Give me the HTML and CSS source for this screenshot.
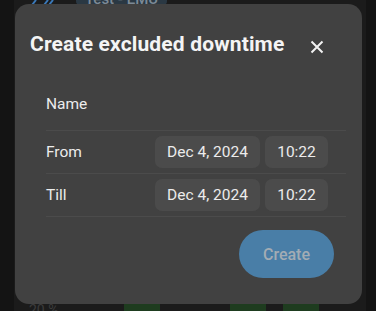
FILE: index.html
```html
<!DOCTYPE html>
<html lang="en">
<head>
    <meta charset="UTF-8">
    <meta name="viewport" content="width=device-width, initial-scale=1.0">
    <title>Create excluded downtime</title>
    <link rel="stylesheet" href="styles.css">
</head>
<body>
    <div class="page">
        <div class="top-strip">
            <svg class="tag-icon" width="26" height="6" viewBox="0 0 26 6">
                <path d="M2 6 L6 1 M14 6 L18 1 M19 6 L23 1" stroke="#3a78b8" stroke-width="2" fill="none"/>
            </svg>
            <div class="device-chip">Test - EMU</div>
        </div>
        <div class="spacer"></div>
        <div class="bottom-strip">
            <span class="percent">20 %</span>
            <div class="bars">
                <div class="bar" style="margin-left: 0"></div>
                <div class="bar" style="margin-left: 70px"></div>
                <div class="bar" style="margin-left: 17px"></div>
            </div>
        </div>
    </div>

    <div class="dialog">
        <div class="dialog-header">
            <h2>Create excluded downtime</h2>
            <button class="close-btn" aria-label="Close">
                <svg width="14" height="14" viewBox="0 0 14 14">
                    <path d="M1.5 1.5 L12.5 12.5 M12.5 1.5 L1.5 12.5" stroke="#f2f2f2" stroke-width="2" fill="none"/>
                </svg>
            </button>
        </div>

        <div class="dialog-body">
            <div class="row row-name">
                <span class="label">Name</span>
            </div>
            <div class="row">
                <span class="label">From</span>
                <div class="pickers">
                    <div class="chip chip-date">Dec 4, 2024</div>
                    <div class="chip chip-time">10:22</div>
                </div>
            </div>
            <div class="row">
                <span class="label">Till</span>
                <div class="pickers">
                    <div class="chip chip-date">Dec 4, 2024</div>
                    <div class="chip chip-time">10:22</div>
                </div>
            </div>
        </div>

        <div class="dialog-footer">
            <button class="create-btn" disabled>Create</button>
        </div>
    </div>
</body>
</html>
```

FILE: styles.css
```css
html, body {
    margin: 0;
    height: 100%;
}
body {
    background: #141414;
    font-family: Roboto, 'Liberation Sans', sans-serif;
    color: #ececec;
    overflow: hidden;
}
.page {
    margin: 0 10px 0 14px;
    height: 311px;
    background: #1b1b1b;
    display: flex;
    flex-direction: column;
}
.top-strip {
    height: 5px;
    overflow: hidden;
    display: flex;
    align-items: flex-end;
    padding-left: 16px;
}
.tag-icon {
    flex: none;
}
.device-chip {
    margin-left: 20px;
    width: 91px;
    height: 20px;
    flex: none;
    background: #2a3843;
    color: #7d8a96;
    font-size: 15px;
    font-weight: 500;
    line-height: 28px;
    text-align: center;
    border-radius: 4px;
}
.spacer {
    flex: 1;
}
.bottom-strip {
    height: 7px;
    overflow: hidden;
    display: flex;
    align-items: flex-start;
    padding-left: 15px;
}
.percent {
    font-size: 14px;
    line-height: 10px;
    color: #3c3c3c;
    margin-top: 1px;
    width: 95px;
}
.bars {
    display: flex;
}
.bar {
    width: 36px;
    height: 7px;
    background: #1e3c1f;
}

.dialog {
    position: absolute;
    left: 15px;
    top: 4px;
    width: 347px;
    height: 300px;
    box-sizing: border-box;
    background: #414141;
    border-radius: 14px;
    padding: 28px 0 26px;
    display: flex;
    flex-direction: column;
}
.dialog-header {
    display: flex;
    align-items: center;
    justify-content: space-between;
    padding: 0 38px 0 15px;
    margin-bottom: 26px;
}
.dialog-header h2 {
    margin: 0;
    font-size: 21px;
    line-height: 24px;
    font-weight: 700;
    letter-spacing: 0.15px;
    color: #f4f4f4;
}
.close-btn {
    background: none;
    border: none;
    padding: 0;
    width: 14px;
    height: 14px;
    margin-top: 5px;
    display: flex;
}
.dialog-body {
    margin: 0 16px 0 31px;
}
.row {
    display: flex;
    align-items: center;
    justify-content: space-between;
    padding: 5px 0;
    border-bottom: 1px solid #4b4b4b;
}
.row-name {
    padding: 12px 0 16px;
}
.label {
    font-size: 15.5px;
    line-height: 20px;
    color: #ececec;
}
.pickers {
    display: flex;
    gap: 5px;
    margin-right: 18px;
}
.chip {
    height: 32px;
    line-height: 32px;
    background: #4b4b4b;
    border-radius: 7px;
    font-size: 15.5px;
    text-align: center;
    color: #ececec;
}
.chip-date {
    width: 105px;
}
.chip-time {
    width: 63px;
}
.dialog-footer {
    margin-top: 13px;
    display: flex;
    justify-content: flex-end;
    padding-right: 28px;
}
.create-btn {
    width: 95px;
    height: 48px;
    border: none;
    border-radius: 24px;
    background: #497ea7;
    color: #a3acb4;
    font-family: Roboto, 'Liberation Sans', sans-serif;
    font-size: 16px;
    font-weight: 500;
}
```
